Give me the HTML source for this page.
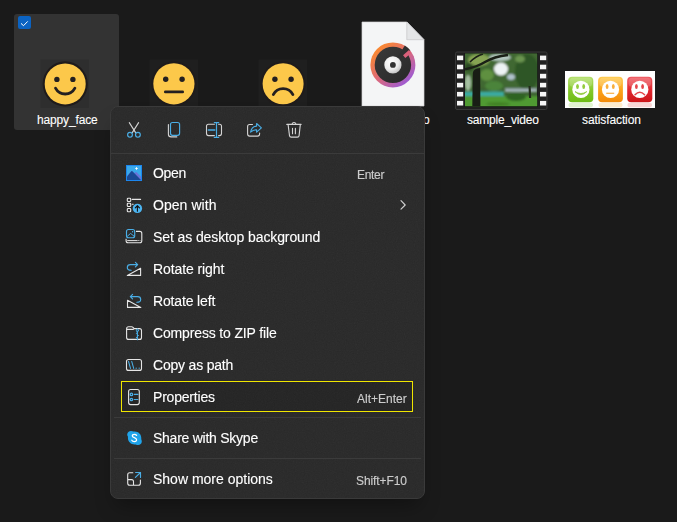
<!DOCTYPE html>
<html><head><meta charset="utf-8">
<style>
html,body{margin:0;padding:0}
body{width:677px;height:522px;background:#1a1a1a;position:relative;overflow:hidden;font-family:"Liberation Sans",sans-serif;color:#fff}
.a{position:absolute}
.tile{left:14px;top:14px;width:105px;height:116px;background:#333333;border-radius:3px}
.chk{left:18px;top:16px;width:13px;height:13px;background:#0b63c2;border-radius:2px}
.lbl{letter-spacing:-0.12px;font-size:12px;color:#fff;white-space:nowrap;line-height:14px;-webkit-text-stroke:0.1px #fff}
.menu{left:110px;top:106px;width:313px;height:391px;background:#292929;overflow:hidden;border:1px solid #3a3a3a;border-radius:8px;box-shadow:0 12px 20px -6px rgba(0,0,0,.35)}
.it{letter-spacing:-0.1px;font-size:14px;color:#fff;white-space:nowrap;line-height:16px;-webkit-text-stroke:0.12px #fff;will-change:transform}
.sc{letter-spacing:-0.1px;font-size:12px;color:#cccccc;white-space:nowrap;line-height:14px;-webkit-text-stroke:0.15px #cccccc;will-change:transform}
.sep{height:1px;background:#3b3b3b}
</style></head><body>
<div class="a tile"></div>
<div class="a chk"><svg width="13" height="13" viewBox="0 0 13 13"><path d="M3 6.4 L5.5 8.7 L9.7 4.4" fill="none" stroke="#fff" stroke-width="1"/></svg></div>

<!-- faces -->
<svg class="a" style="left:0;top:0" width="677" height="522">
  <rect x="40.5" y="59.5" width="48.5" height="48.5" fill="#2e2e2e"/>
  <circle cx="65.2" cy="83.9" r="22.6" fill="#1f1b1b"/>
  <circle cx="65.2" cy="83.9" r="20.5" fill="#fcc84a"/>
  <circle cx="56.9" cy="79.4" r="2.7" fill="#231f20"/>
  <circle cx="72.9" cy="79.4" r="2.7" fill="#231f20"/>
  <path d="M55.5 88.2 A11 11 0 0 0 74.9 88.2" fill="none" stroke="#231f20" stroke-width="2.8" stroke-linecap="round"/>

  <rect x="149.5" y="59.5" width="48.5" height="48.5" fill="#1f1f1f"/>
  <circle cx="173.9" cy="83.8" r="22.6" fill="#1f1b1b"/>
  <circle cx="173.9" cy="83.8" r="20.6" fill="#fcc84a"/>
  <circle cx="165.7" cy="79.2" r="2.7" fill="#231f20"/>
  <circle cx="182.1" cy="79.2" r="2.7" fill="#231f20"/>
  <path d="M165.4 91.9 H182.6" fill="none" stroke="#231f20" stroke-width="2.9" stroke-linecap="round"/>

  <rect x="258.5" y="59.5" width="48.5" height="48.5" fill="#1f1f1f"/>
  <circle cx="283.1" cy="83.8" r="22.6" fill="#1f1b1b"/>
  <circle cx="283.1" cy="83.8" r="20.5" fill="#fcc84a"/>
  <circle cx="274.9" cy="79.3" r="2.7" fill="#231f20"/>
  <circle cx="291.1" cy="79.3" r="2.7" fill="#231f20"/>
  <path d="M273.3 94.6 A11 11 0 0 1 292.9 94.6" fill="none" stroke="#231f20" stroke-width="2.8" stroke-linecap="round"/>

  <!-- document -->
  <defs>
    <linearGradient id="ring" x1="0.15" y1="0.1" x2="0.85" y2="0.9">
      <stop offset="0" stop-color="#fb8a2c"/>
      <stop offset="0.5" stop-color="#de6a78"/>
      <stop offset="1" stop-color="#9a5ad8"/>
    </linearGradient>
    <radialGradient id="disc" cx="0.4" cy="0.35" r="0.7">
      <stop offset="0" stop-color="#ffffff"/>
      <stop offset="0.6" stop-color="#ececec"/>
      <stop offset="1" stop-color="#bdbdbd"/>
    </radialGradient>
    <linearGradient id="dark" x1="0" y1="0" x2="1" y2="1">
      <stop offset="0" stop-color="#3a3a3a"/><stop offset="1" stop-color="#282828"/>
    </linearGradient>
    <linearGradient id="sky" x1="0" y1="0" x2="0" y2="1">
      <stop offset="0" stop-color="#5e8a4a"/><stop offset="0.55" stop-color="#3e6a2c"/><stop offset="1" stop-color="#35702a"/>
    </linearGradient>
    <linearGradient id="gb" x1="0" y1="0" x2="0" y2="1">
      <stop offset="0" stop-color="#b4e06a"/><stop offset="0.5" stop-color="#86c82c"/><stop offset="1" stop-color="#6cbc14"/>
    </linearGradient>
    <linearGradient id="ob" x1="0" y1="0" x2="0" y2="1">
      <stop offset="0" stop-color="#ffcc50"/><stop offset="0.5" stop-color="#fca41c"/><stop offset="1" stop-color="#f48a08"/>
    </linearGradient>
    <linearGradient id="rb" x1="0" y1="0" x2="0" y2="1">
      <stop offset="0" stop-color="#f05a62"/><stop offset="0.5" stop-color="#e02830"/><stop offset="1" stop-color="#cc1418"/>
    </linearGradient>
  </defs>
  <path d="M362 22 H406.8 L424 39.7 V106 H362 Z" fill="#f4f5f6" stroke="#d4d4d6" stroke-width="0.7"/>
  <path d="M406.8 22 V39.7 H424 Z" fill="#e4e5e7" stroke="#c9c9cb" stroke-width="0.8" stroke-linejoin="miter"/>
  <circle cx="392.9" cy="64.9" r="22.5" fill="url(#ring)"/>
  <circle cx="392.9" cy="64.9" r="18.2" fill="url(#dark)"/>
  <path d="M392.9 64.9 L404.8 45.6 A22.6 22.6 0 0 1 410.4 50.6 Z" fill="#2f2f2f"/>
  <path d="M410.2 51.4 L404.2 56.6" stroke="#d9607a" stroke-width="3.6" stroke-linecap="butt"/>
  <circle cx="392.9" cy="64.9" r="8.6" fill="url(#disc)"/>
  <circle cx="392.9" cy="64.9" r="2.9" fill="#333"/>

  <!-- video -->
  <rect x="455.5" y="52" width="91.5" height="57.5" rx="1.5" fill="#202020" stroke="#383838" stroke-width="1"/>
  <rect x="464.5" y="53" width="73.2" height="54" fill="#121212"/>
  <g fill="#f5f5f5">
    <rect x="457" y="55.6" width="6.2" height="4.6"/><rect x="457" y="64.7" width="6.2" height="4.6"/><rect x="457" y="73.8" width="6.2" height="4.6"/>
    <rect x="457" y="82.8" width="6.2" height="4.6"/><rect x="457" y="91.9" width="6.2" height="4.6"/><rect x="457" y="100.9" width="6.2" height="4.6"/>
    <rect x="540" y="55.6" width="6.2" height="4.6"/><rect x="540" y="64.7" width="6.2" height="4.6"/><rect x="540" y="73.8" width="6.2" height="4.6"/>
    <rect x="540" y="82.8" width="6.2" height="4.6"/><rect x="540" y="91.9" width="6.2" height="4.6"/><rect x="540" y="100.9" width="6.2" height="4.6"/>
  </g>
  <svg x="465" y="53.5" width="72.2" height="52.8" viewBox="465 53.5 72.2 52.8" overflow="hidden">
  <filter id="bl" x="-20%" y="-20%" width="140%" height="140%"><feGaussianBlur stdDeviation="1.2"/></filter>
  <rect x="465" y="53.5" width="72.2" height="52.8" fill="#3c6230"/>
  <g filter="url(#bl)">
    <rect x="460" y="48" width="85" height="40" fill="#3f6830"/>
    <ellipse cx="479" cy="60" rx="11" ry="6" fill="#86a452"/>
    <ellipse cx="469" cy="67" rx="4" ry="4" fill="#2c4a22"/>
    <ellipse cx="500" cy="57.5" rx="11" ry="3.5" fill="#b4c8c0"/>
    <ellipse cx="501" cy="69" rx="7" ry="6.5" fill="#eef3f5"/>
    <ellipse cx="511" cy="77" rx="4" ry="3" fill="#b0c2cc"/>
    <ellipse cx="487" cy="75" rx="7" ry="6" fill="#5e9040"/>
    <ellipse cx="527" cy="72" rx="12" ry="18" fill="#2f5626"/>
    <ellipse cx="520" cy="59" rx="5" ry="3.5" fill="#6a9450"/>
    <ellipse cx="468" cy="83" rx="3" ry="8" fill="#a6c0a2"/>
    <ellipse cx="494" cy="86" rx="9" ry="5" fill="#4c843a"/>
    <rect x="505" y="88.5" width="32" height="3.5" fill="#a4b4bc"/>
    <rect x="462" y="91.5" width="42" height="4.5" fill="#3aaaa2"/>
    <rect x="460" y="96" width="85" height="12" fill="#4f9a32"/>
    <ellipse cx="516" cy="97" rx="10" ry="4" fill="#2f6424"/>
    <ellipse cx="498" cy="104" rx="12" ry="2" fill="#428228"/>
  </g>
  <path d="M472.3 106.3 L472.8 73 Q473.2 68.3 480.2 68 L480.4 106.3 Z" fill="#181d15"/>
  <path d="M465 69.3 Q477 67 485 62 Q494 56.5 508 55" stroke="#1a2016" stroke-width="2.5" fill="none"/>
  <path d="M470 62 Q476 56 483 54" stroke="#1a2016" stroke-width="1.5" fill="none"/>
  <path d="M528.5 86 L529 98 H531.2 L530.6 86 Z" fill="#232c1c"/>
</svg>
  <!-- satisfaction -->
  <rect x="565" y="71" width="90" height="37" fill="#ffffff"/>
  <rect x="568.1" y="76.8" width="25.2" height="25.5" rx="4" fill="url(#gb)"/>
  <rect x="598.1" y="76.8" width="24.8" height="25.5" rx="4" fill="url(#ob)"/>
  <rect x="627.2" y="76.8" width="25.1" height="25.5" rx="4" fill="url(#rb)"/>
  <rect x="569.5" y="77.8" width="22.5" height="9" rx="3.5" fill="#fff" opacity="0.18"/>
  <rect x="599.5" y="77.8" width="22" height="9" rx="3.5" fill="#fff" opacity="0.18"/>
  <rect x="628.5" y="77.8" width="22.5" height="9" rx="3.5" fill="#fff" opacity="0.18"/>
  <rect x="568.5" y="102.8" width="24.5" height="4.5" rx="2" fill="#d4ecbc" opacity="0.7"/>
  <rect x="598.5" y="102.8" width="24" height="4.5" rx="2" fill="#fde2b8" opacity="0.7"/>
  <rect x="627.5" y="102.8" width="24.5" height="4.5" rx="2" fill="#f6c4c4" opacity="0.7"/>
  <circle cx="580.9" cy="89.4" r="8.6" fill="#fff"/>
  <circle cx="610.5" cy="89.4" r="8.6" fill="#fff"/>
  <circle cx="639.8" cy="89.4" r="8.6" fill="#fff"/>
  <g fill="#92cc3c"><ellipse cx="577.5" cy="86.5" rx="1.4" ry="2.6"/><ellipse cx="583.7" cy="86.5" rx="1.4" ry="2.6"/></g>
  <path d="M575 91.6 Q580.9 97.6 586.8 91.6 Q580.9 95.4 575 91.6 Z" fill="#92cc3c" stroke="#92cc3c" stroke-width="0.8"/>
  <g fill="#f8ae3a"><ellipse cx="607.1" cy="86.5" rx="1.4" ry="2.6"/><ellipse cx="613.3" cy="86.5" rx="1.4" ry="2.6"/></g>
  <path d="M606.2 93.3 H614.2" stroke="#f8b450" stroke-width="1.3" fill="none"/>
  <g fill="#e4464a"><ellipse cx="636.4" cy="86.5" rx="1.4" ry="2.6"/><ellipse cx="642.6" cy="86.5" rx="1.4" ry="2.6"/></g>
  <path d="M635 94.8 Q639.8 89.6 644.6 94.8" fill="none" stroke="#e4464a" stroke-width="1.5" stroke-linecap="round"/>
</svg>

<div class="a lbl" style="left:37px;top:113px;letter-spacing:-0.15px">happy_face</div>
<div class="a lbl" style="left:467px;top:113px;letter-spacing:-0.2px">sample_video</div>
<div class="a lbl" style="left:582px;top:113px;letter-spacing:-0.1px">satisfaction</div>
<div class="a lbl" style="left:423px;top:113px">o</div>

<div class="a menu"><svg width="313" height="391" style="position:absolute;left:0;top:0;border-radius:7px;opacity:0.05"><filter id="nz"><feTurbulence type="fractalNoise" baseFrequency="0.9" numOctaves="2" seed="3"/><feColorMatrix type="saturate" values="0"/></filter><rect width="313" height="391" filter="url(#nz)"/></svg></div>

<!-- menu items -->
<div class="a it" style="left:153px;top:165px;letter-spacing:-0.35px">Open</div>
<div class="a sc" style="left:357px;top:168px;letter-spacing:-0.3px">Enter</div>
<div class="a it" style="left:153px;top:197px;letter-spacing:0.05px">Open with</div>
<div class="a it" style="left:153px;top:229px;letter-spacing:-0.1px">Set as desktop background</div>
<div class="a it" style="left:153px;top:261px;letter-spacing:-0.1px">Rotate right</div>
<div class="a it" style="left:153px;top:293px;letter-spacing:-0.15px">Rotate left</div>
<div class="a it" style="left:153px;top:325px;letter-spacing:-0.15px">Compress to ZIP file</div>
<div class="a it" style="left:153px;top:357px;letter-spacing:-0.2px">Copy as path</div>
<div class="a" style="left:121px;top:381px;width:290px;height:29px;border:1px solid #f0e600;background:rgba(0,0,0,0.1)"></div>
<div class="a it" style="left:153px;top:389px;letter-spacing:-0.2px">Properties</div>
<div class="a sc" style="left:357px;top:392px;letter-spacing:0px">Alt+Enter</div>
<div class="a sep" style="left:114px;top:417px;width:307px"></div>
<div class="a it" style="left:153px;top:430px;letter-spacing:-0.25px">Share with Skype</div>
<div class="a sep" style="left:114px;top:458px;width:307px"></div>
<div class="a it" style="left:153px;top:471px;letter-spacing:0px">Show more options</div>
<div class="a sc" style="left:356px;top:474px;letter-spacing:-0.1px">Shift+F10</div>
<div class="a sep" style="left:111px;top:153px;width:313px"></div>


<svg class="a" style="left:0;top:0" width="677" height="522" fill="none" stroke-linecap="round" stroke-linejoin="round">
  <defs>
    <linearGradient id="pg" x1="0" y1="0" x2="0" y2="1">
      <stop offset="0" stop-color="#3fb0ee"/><stop offset="1" stop-color="#2a8ee0"/>
    </linearGradient>
  </defs>
  <!-- toolbar: cut -->
  <g stroke="#d4d4d4" stroke-width="1.1">
    <path d="M129.3 122.6 L135.6 132.6"/>
    <path d="M138.6 122.6 L132.3 132.6"/>
  </g>
  <g stroke="#4aaee6" stroke-width="1.15">
    <circle cx="130" cy="134.8" r="2.4"/>
    <circle cx="137.9" cy="134.8" r="2.4"/>
  </g>
  <!-- copy -->
  <path d="M168.4 124.5 V134.2 Q168.4 136.9 171.1 136.9 H176.8" stroke="#d4d4d4" stroke-width="1.1"/>
  <rect x="170.5" y="122.5" width="9.1" height="12.8" rx="2" stroke="#4aaee6" stroke-width="1.15"/>
  <!-- rename -->
  <path d="M214.4 124.3 H208.5 Q206.5 124.3 206.5 126.3 V133.6 Q206.5 135.6 208.5 135.6 H214.4 M218.6 124.3 H219.5 Q221.5 124.3 221.5 126.3 V133.6 Q221.5 135.6 219.5 135.6 H218.6" stroke="#d4d4d4" stroke-width="1.1"/>
  <g stroke="#4aaee6" stroke-width="1.15">
    <path d="M216.5 122.6 V137.4 M214.3 122.6 H218.7 M214.3 137.4 H218.7"/>
    <path d="M208.3 130 H214.8" stroke-width="1.4"/>
  </g>
  <!-- share -->
  <path d="M252.5 124.5 H249.6 Q247.6 124.5 247.6 126.5 V134.1 Q247.6 136.1 249.6 136.1 H257.6 Q259.6 136.1 259.6 134.1 V133.1" stroke="#d4d4d4" stroke-width="1.1"/>
  <path d="M250.6 132.2 C251.2 128.6 253.4 126.4 256.6 126.1 V123.5 L261.4 127.8 L256.6 132.2 V129.7 C254.2 129.7 252.2 130.6 250.6 132.2 Z" stroke="#4aaee6" stroke-width="1.1"/>
  <!-- delete -->
  <g stroke="#d4d4d4" stroke-width="1.1">
    <path d="M286.8 124.4 H301.1"/>
    <path d="M292.1 124.2 Q292.4 122.5 294 122.5 Q295.6 122.5 295.9 124.2"/>
    <path d="M288.1 124.6 L289.5 135.6 Q289.7 137.1 291.2 137.1 H297.4 Q298.9 137.1 299.1 135.6 L300.3 124.6"/>
    <path d="M292.5 128.3 V133.8 M295.4 128.3 V133.8"/>
  </g>

  <!-- Open (photos) -->
  <rect x="126" y="165" width="16" height="16" fill="#1c86ee"/>
  <rect x="127" y="166" width="14" height="14" fill="#3aa9ea"/>
  <path d="M127 176.5 L131.3 171.3 Q131.8 170.7 132.4 171.2 L134.3 173.3 L135.6 172.3 Q136.2 171.9 136.8 172.4 L141 176.8 V180 H127 Z" fill="#6a74d8"/>
  <path d="M127 176.5 L131.3 171.3 Q131.8 170.7 132.4 171.2 L141 180 H127 Z" fill="#1a4a94"/>
  <path d="M136.5 166.8 L137.1 168 L138.3 168.5 L137.1 169 L136.5 170.2 L135.9 169 L134.7 168.5 L135.9 168 Z" fill="#fff"/>

  <!-- Open with -->
  <g stroke="#e6e6e6" stroke-width="1.1">
    <rect x="127.3" y="198.3" width="3.4" height="3.2" rx="0.8"/>
    <rect x="127.3" y="203.3" width="3.4" height="3.2" rx="0.8"/>
    <rect x="127.3" y="208.5" width="3.4" height="3.2" rx="0.8"/>
    <path d="M132.2 199.4 H140.6"/>
    <path d="M132.3 204.3 H133.2"/>
  </g>
  <circle cx="137.4" cy="208.4" r="4.7" fill="#4cb4f0"/>
  <path d="M137.4 211.2 V205.8 M135.3 207.8 L137.4 205.7 L139.5 207.8" stroke="#111" stroke-width="1.1"/>

  <!-- Set as desktop background -->
  <path d="M136 231.4 H139.8 Q141.8 231.4 141.8 233.4 V240.7 Q141.8 242.7 139.8 242.7 H128.1 Q126.1 242.7 126.1 240.7 V238.8" stroke="#e6e6e6" stroke-width="1.1" stroke-linecap="butt"/>
  <path d="M127.6 240.6 H137.2" stroke="#e6e6e6" stroke-width="1"/>
  <circle cx="138.3" cy="240.6" r="0.5" fill="#e6e6e6"/>
  <circle cx="140" cy="240.6" r="0.5" fill="#e6e6e6"/>
  <rect x="126.5" y="229.5" width="8.2" height="8.2" rx="2" stroke="#4aaee6" stroke-width="1.15"/>
  <path d="M127.6 236 L130.6 233.4 L133.8 236" stroke="#4aaee6" stroke-width="1"/>
  <circle cx="132.6" cy="231.7" r="0.7" fill="#4aaee6"/>

  <!-- Rotate right -->
  <path d="M127.3 275.4 L140.6 268.3 V275.4 Z" stroke="#e6e6e6" stroke-width="1.1"/>
  <path d="M131.2 270.2 C128.3 270.2 127.3 268.8 127.3 267.4 C127.3 265.9 128.6 264.6 130.4 264.6 H137.6 M135.4 262.4 L137.7 264.6 L135.4 266.8" stroke="#4aaee6" stroke-width="1.15"/>

  <!-- Rotate left -->
  <path d="M140.8 307.4 L127.5 300.3 V307.4 Z" stroke="#e6e6e6" stroke-width="1.1"/>
  <path d="M136.8 302.2 C139.7 302.2 140.7 300.8 140.7 299.4 C140.7 297.9 139.4 296.6 137.6 296.6 H130.4 M132.6 294.4 L130.3 296.6 L132.6 298.8" stroke="#4aaee6" stroke-width="1.15"/>

  <!-- Compress -->
  <path d="M134.2 328.6 H139.5 Q141.5 328.6 141.5 330.6 V337.4 Q141.5 339.4 139.5 339.4 H128.6 Q126.6 339.4 126.6 337.4 V328.7 Q126.6 326.7 128.6 326.7 H131.6 Q132.4 326.7 133 327.3 L134.2 328.6 Z M127 329.4 H133.3" stroke="#e6e6e6" stroke-width="1.1"/>
  <path d="M137.4 331.5 V339.8 M136.4 333.3 H137.4 M137.4 335.5 H138.4 M136.4 337.5 H137.4" stroke="#4aaee6" stroke-width="1.1"/>
  <ellipse cx="137.4" cy="330.4" rx="1" ry="1.5" stroke="#4aaee6" stroke-width="1"/>

  <!-- Copy as path -->
  <rect x="126.5" y="359.5" width="15" height="10.9" rx="2" stroke="#e6e6e6" stroke-width="1.1"/>
  <path d="M128.5 361.4 L130.5 368.4 M131.7 361.4 L133.7 368.4" stroke="#4aaee6" stroke-width="1.05"/>
  <circle cx="136.2" cy="368.2" r="0.65" fill="#4aaee6"/>
  <circle cx="139.2" cy="368.2" r="0.65" fill="#4aaee6"/>

  <!-- Properties -->
  <rect x="128.6" y="389.5" width="10.7" height="15.1" rx="2" stroke="#e6e6e6" stroke-width="1.1"/>
  <circle cx="131.4" cy="394.4" r="1.2" stroke="#4aaee6" stroke-width="1.3"/>
  <circle cx="131.4" cy="399.5" r="1.2" stroke="#4aaee6" stroke-width="1.3"/>
  <path d="M134.3 394.4 H137.9 M134.3 399.5 H137.9" stroke="#4aaee6" stroke-width="1.2"/>

  <!-- Skype -->
  <path d="M131 431 C132.1 431 132.9 431.3 133.6 431.6 C134 431.5 134.4 431.4 134.8 431.4 C138.5 431.4 141.3 434.3 141.3 437.9 C141.3 438.3 141.3 438.7 141.2 439.1 C141.6 439.8 141.8 440.6 141.8 441.5 C141.8 443.5 140.1 445 138.1 445 C137.3 445 136.5 444.8 135.8 444.4 C135.4 444.5 135 444.5 134.6 444.5 C131 444.5 127.9 441.6 127.9 438 C127.9 437.6 128 437.2 128 436.8 C127.5 436.2 127.2 435.4 127.2 434.6 C127.2 432.6 129 431 131 431 Z" fill="#20a4ea"/>
  <path d="M136.6 435.4 C136.2 434.7 135.4 434.3 134.4 434.3 C133.1 434.3 132.3 435 132.3 435.9 C132.3 438 136.6 437.2 136.6 439.7 C136.6 440.8 135.6 441.5 134.3 441.5 C133.1 441.5 132.2 441 131.8 440.2" stroke="#fff" stroke-width="1.25"/>

  <!-- Show more options -->
  <path d="M132.8 472.7 H129.7 Q127.7 472.7 127.7 474.7 V483.2 Q127.7 485.2 129.7 485.2 H138.4 Q140.4 485.2 140.4 483.2 V480.1 M127.7 479.6 H131.5 Q133.5 479.6 133.5 481.6 V485.2" stroke="#e6e6e6" stroke-width="1.1"/>
  <path d="M135.4 477.4 L140.5 472.5 M135.6 472.5 H140.5 V477.4" stroke="#4aaee6" stroke-width="1.15"/>

  <!-- chevron -->
  <path d="M401 200.7 L405.2 205 L401 209.2" stroke="#d0d0d0" stroke-width="1.15"/>
</svg>
</body></html>
